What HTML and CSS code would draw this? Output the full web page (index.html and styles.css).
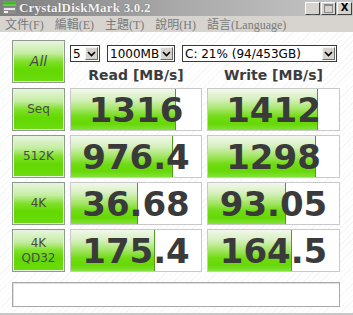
FILE: index.html
```html
<!DOCTYPE html>
<html>
<head>
  <title>CrystalDiskMark 3.0.2</title>
  <meta charset="utf-8">
  <link rel="stylesheet" href="styles.css">
</head>
<body>
  <div class="window">
    <div class="titlebar">
      <svg class="app-icon" width="15" height="14" viewBox="0 0 15 14">
        <rect x="1" y="0" width="13" height="2" fill="#3fbf2a"/>
        <rect x="1" y="3" width="13" height="2" fill="#5ad040"/>
        <rect x="1" y="6" width="13" height="7" fill="#8c8c8c"/>
        <rect x="2" y="7" width="11" height="2" fill="#e6e6e6"/>
        <rect x="2" y="10" width="4" height="2" fill="#f2f2f2"/>
      </svg>
      <span class="title">CrystalDiskMark 3.0.2</span>
      <div class="win-buttons">
        <span class="win-btn dim">_</span>
        <span class="win-btn dim"><span class="box"></span></span>
        <span class="win-btn close">X</span>
      </div>
    </div>

    <div class="menubar">
      <span>文件(F)</span>
      <span>編輯(E)</span>
      <span>主題(T)</span>
      <span>說明(H)</span>
      <span>語言(Language)</span>
    </div>

    <div class="main">
      <div class="top">
        <div class="label-btn all">All</div>
        <div class="controls">
          <div class="selects">
            <div class="select s-count"><span>5</span><span class="arrow"><svg width="9" height="6" viewBox="0 0 9 6"><polyline points="1,1 4.5,4.5 8,1" fill="none" stroke="#000" stroke-width="1.6"/></svg></span></div>
            <div class="select s-size"><span>1000MB</span><span class="arrow"><svg width="9" height="6" viewBox="0 0 9 6"><polyline points="1,1 4.5,4.5 8,1" fill="none" stroke="#000" stroke-width="1.6"/></svg></span></div>
            <div class="select s-drive"><span>C: 21% (94/453GB)</span><span class="arrow"><svg width="9" height="6" viewBox="0 0 9 6"><polyline points="1,1 4.5,4.5 8,1" fill="none" stroke="#000" stroke-width="1.6"/></svg></span></div>
          </div>
          <div class="headers">
            <span>Read [MB/s]</span>
            <span>Write [MB/s]</span>
          </div>
        </div>
      </div>

      <div class="rows">
        <div class="label-btn">Seq</div>
        <div class="cell"><div class="bar" style="width: 80%"></div><span class="num">1316</span></div>
        <div class="cell"><div class="bar" style="width: 83%"></div><span class="num">1412</span></div>

        <div class="label-btn">512K</div>
        <div class="cell"><div class="bar" style="width: 78%"></div><span class="num">976.4</span></div>
        <div class="cell"><div class="bar" style="width: 82%"></div><span class="num">1298</span></div>

        <div class="label-btn">4K</div>
        <div class="cell"><div class="bar" style="width: 51%"></div><span class="num">36.68</span></div>
        <div class="cell"><div class="bar" style="width: 59%"></div><span class="num">93.05</span></div>

        <div class="label-btn two">4K<br>QD32</div>
        <div class="cell"><div class="bar" style="width: 64%"></div><span class="num">175.4</span></div>
        <div class="cell"><div class="bar" style="width: 63%"></div><span class="num">164.5</span></div>
      </div>

      <div class="comment"></div>
    </div>
  </div>
</body>
</html>
```

FILE: styles.css
```css
/* CrystalDiskMark window */

body {
  margin: 0;
  background-color: #ffffff;
  font-family: "DejaVu Sans", Verdana, sans-serif;
}

.window {
  width: 353px;
  height: 315px;
  display: flex;
  flex-direction: column;
  overflow: hidden;
}

.titlebar {
  height: 16px;
  display: flex;
  align-items: center;
  background: linear-gradient(to right, #7e7e7e, #a9a9a9 50%, #c6c6c6);
  padding-left: 2px;
}

.app-icon {
  margin-right: 2px;
}

.title {
  font-family: "Liberation Serif", "Times New Roman", serif;
  font-weight: bold;
  font-size: 13px;
  color: #f4f4f4;
  text-shadow: 0 0 1px #555;
  letter-spacing: 0.2px;
}

.win-buttons {
  margin-left: auto;
  display: flex;
  gap: 1px;
  padding-right: 1px;
}

.win-btn {
  width: 15px;
  height: 13px;
  box-sizing: border-box;
  background-color: #d6d3ce;
  border: 1px solid;
  border-color: #ffffff #404040 #404040 #ffffff;
  font-family: "DejaVu Sans", sans-serif;
  font-weight: bold;
  font-size: 10px;
  line-height: 10px;
  text-align: center;
  color: #000;
  display: flex;
  justify-content: center;
  align-items: center;
}

.win-btn.dim {
  color: #5a5a5a;
  align-items: flex-end;
}

.win-btn .box {
  width: 7px;
  height: 6px;
  border: 1px solid #8a8a8a;
  border-top-width: 2px;
  margin-bottom: 1px;
}

.menubar {
  height: 16px;
  background-color: #d7d4cf;
  display: flex;
  align-items: center;
  gap: 11px;
  padding-left: 5px;
  font-family: "Liberation Serif", "Noto Sans CJK TC", serif;
  font-size: 12px;
  color: #7a7a7a;
}

.main {
  flex: 1;
  padding: 8px 13px 0 12px;
  background-color: #ffffff;
  background-image: repeating-linear-gradient(135deg, #ffffff 0, #ffffff 3px, #f6f6f6 3px, #f6f6f6 4px);
  border-bottom: 2px solid #c8c8c8;
}

.top {
  display: flex;
  gap: 5px;
  height: 43px;
}

.label-btn {
  width: 53px;
  height: 43px;
  box-sizing: border-box;
  border: 1px solid #8f9a8f;
  box-shadow: inset 0 0 0 1px #e6f3dc;
  background: linear-gradient(to bottom, #e9f5e0 0%, #c4eda0 30%, #7fe02a 50%, #62d800 70%, #6cdc10 100%);
  display: flex;
  align-items: center;
  justify-content: center;
  text-align: center;
  font-size: 12px;
  line-height: 15px;
  color: #4a4a4a;
}

.label-btn.all {
  font-size: 14px;
  font-style: italic;
}

.controls {
  flex: 1;
  display: flex;
  flex-direction: column;
}

.selects {
  display: flex;
  margin-top: 5px;
  height: 17px;
}

.select {
  box-sizing: border-box;
  height: 17px;
  border: 1px solid #3a3a3a;
  background-color: #ffffff;
  display: flex;
  align-items: center;
  justify-content: space-between;
  font-size: 12px;
  color: #000;
  padding-left: 2px;
}

.select .arrow {
  width: 13px;
  height: 13px;
  margin-right: 1px;
  background-color: #d6d3ce;
  border: 1px solid;
  border-color: #f4f4f4 #6a6a6a #6a6a6a #f4f4f4;
  box-sizing: border-box;
  display: flex;
  align-items: center;
  justify-content: center;
}

.s-count {
  width: 30px;
}

.s-size {
  width: 68px;
  margin-left: 7px;
}

.s-drive {
  width: 155px;
  margin-left: 7px;
}

.headers {
  display: grid;
  grid-template-columns: 132px 133px;
  gap: 5px;
  margin-top: 5px;
  font-weight: bold;
  font-size: 14px;
  color: #3c3c3c;
  text-align: center;
}

.rows {
  display: grid;
  grid-template-columns: 53px 132px 133px;
  grid-auto-rows: 43px;
  column-gap: 5px;
  row-gap: 4px;
  margin-top: 5px;
}

.cell {
  position: relative;
  box-sizing: border-box;
  border: 1px solid #c9c9c9;
  background-color: #ffffff;
  display: flex;
  align-items: center;
  justify-content: center;
  overflow: hidden;
}

.bar {
  position: absolute;
  left: 0;
  top: 0;
  bottom: 0;
  border-right: 1px solid #4f9e22;
  background: linear-gradient(to bottom, #f2f8ec 0%, #d6f0bf 25%, #a6e66a 48%, #70dc14 68%, #66d806 85%, #82e23a 100%);
}

.num {
  position: relative;
  font-weight: bold;
  font-size: 34px;
  color: #3a3a3a;
  letter-spacing: 0px;
}

.comment {
  margin-top: 10px;
  height: 25px;
  box-sizing: border-box;
  border: 1px solid #a8a8a8;
  box-shadow: inset 1px 1px 0 #e0e0e0;
  background-color: #ffffff;
}
```
